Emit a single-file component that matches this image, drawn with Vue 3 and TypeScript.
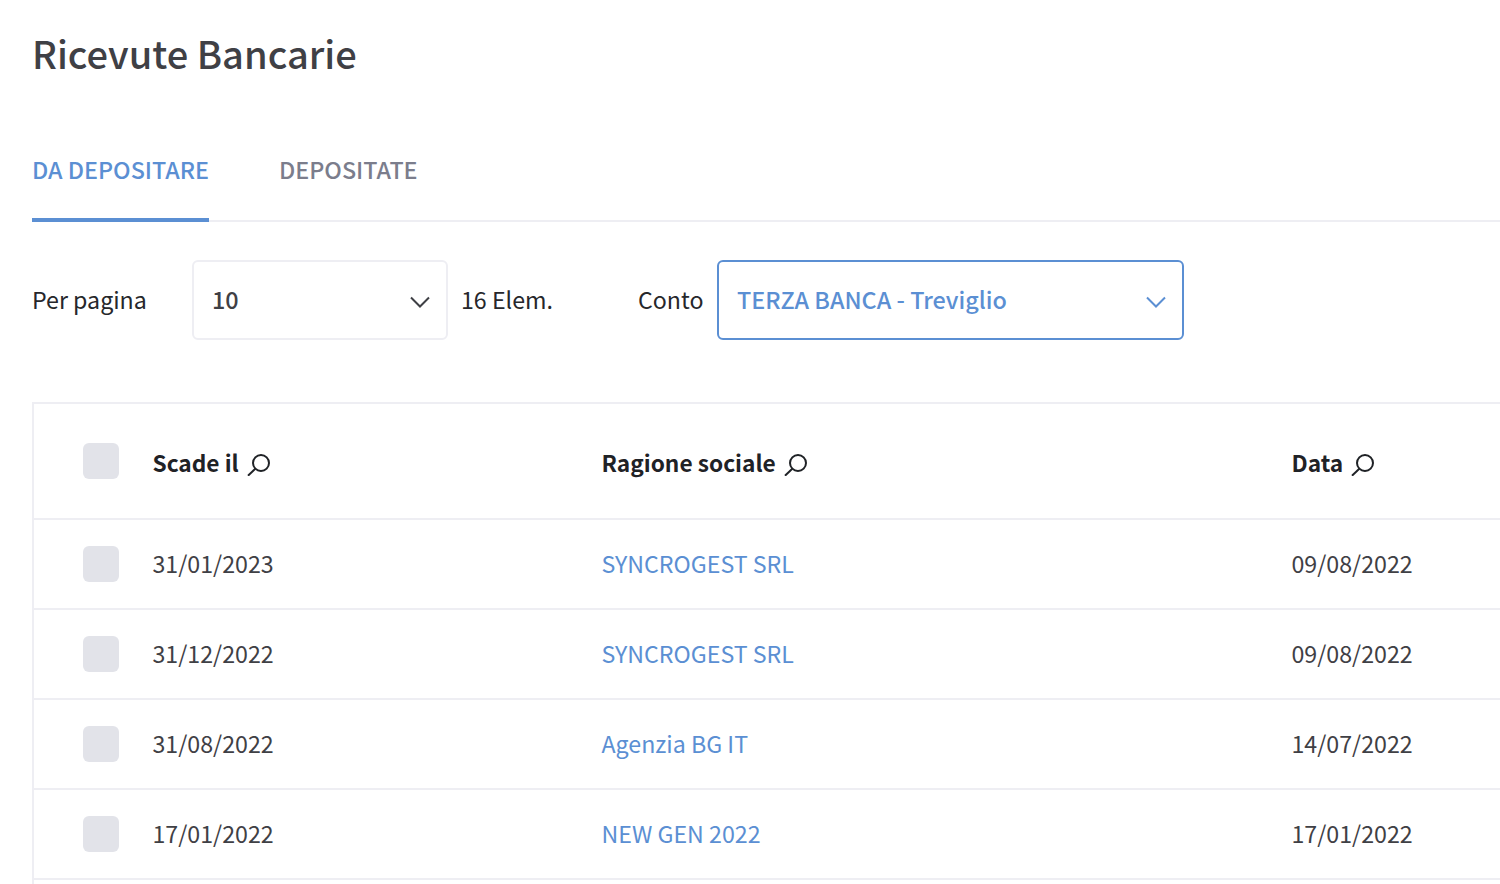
<script setup lang="ts">
interface Row {
  due: string
  name: string
  date: string
}

const rows: Row[] = [
  { due: '31/01/2023', name: 'SYNCROGEST SRL', date: '09/08/2022' },
  { due: '31/12/2022', name: 'SYNCROGEST SRL', date: '09/08/2022' },
  { due: '31/08/2022', name: 'Agenzia BG IT', date: '14/07/2022' },
  { due: '17/01/2022', name: 'NEW GEN 2022', date: '17/01/2022' }
]
</script>

<template>
  <div class="page">
    <h1 class="title">Ricevute Bancarie</h1>

    <div class="tabs">
      <div class="tab active">DA DEPOSITARE</div>
      <div class="tab">DEPOSITATE</div>
    </div>

    <div class="filters">
      <span class="label per-page">Per pagina</span>
      <div class="select small">
        <span class="value">10</span>
        <svg class="chevron" width="20" height="12" viewBox="0 0 20 12"><path d="M1 1.5l9 9 9-9" /></svg>
      </div>
      <span class="label count">16 Elem.</span>
      <span class="label conto">Conto</span>
      <div class="select wide">
        <span class="value">TERZA BANCA - Treviglio</span>
        <svg class="chevron" width="20" height="12" viewBox="0 0 20 12"><path d="M1 1.5l9 9 9-9" /></svg>
      </div>
    </div>

    <div class="table">
      <div class="row head">
        <div class="check"></div>
        <div class="cell col-due">
          Scade il
          <svg class="search" width="24" height="22" viewBox="0 0 24 22"><circle cx="14" cy="9" r="8" /><path d="M8.3 14.7L1 21.7" /></svg>
        </div>
        <div class="cell col-name">
          Ragione sociale
          <svg class="search" width="24" height="22" viewBox="0 0 24 22"><circle cx="14" cy="9" r="8" /><path d="M8.3 14.7L1 21.7" /></svg>
        </div>
        <div class="cell">
          Data
          <svg class="search" width="24" height="22" viewBox="0 0 24 22"><circle cx="14" cy="9" r="8" /><path d="M8.3 14.7L1 21.7" /></svg>
        </div>
      </div>
      <div v-for="(row, i) in rows" :key="i" class="row">
        <div class="check"></div>
        <div class="cell col-due">{{ row.due }}</div>
        <div class="cell col-name link">{{ row.name }}</div>
        <div class="cell">{{ row.date }}</div>
      </div>
    </div>
  </div>
</template>

<style>
html,
body {
  margin: 0;
  overflow: hidden;
  background: #fff;
}
</style>

<style scoped>
.page {
  box-sizing: border-box;
  height: 884px;
  overflow: hidden;
  padding: 28px 0 0 32px;
  font-family: "Noto Sans CJK SC", "Noto Sans", sans-serif;
  color: #3f4045;
}

.title {
  margin: 0;
  height: 50px;
  font-size: 38px;
  line-height: 50px;
  font-weight: 500;
  color: #3f4045;
}

/* tabs */
.tabs {
  display: flex;
  gap: 70px;
  height: 92px;
  margin-top: 50px;
  border-bottom: 2px solid #eeeef3;
}

.tab {
  height: 92px;
  padding-top: 26px;
  box-sizing: border-box;
  font-size: 23.3px;
  line-height: 30px;
  font-weight: 500;
  color: #7b7d8c;
}

.tab.active {
  color: #5b8fd3;
  height: 94px;
  border-bottom: 4px solid #5b8fd3;
}

/* filters */
.filters {
  display: flex;
  align-items: center;
  height: 80px;
  margin-top: 38px;
}

.label {
  padding-bottom: 2px;
  font-size: 23.2px;
  color: #26272b;
}

.per-page {
  width: 160px;
}

.count {
  width: 177px;
  margin-left: 13px;
}

.conto {
  width: 79px;
}

.select {
  box-sizing: border-box;
  height: 80px;
  display: flex;
  align-items: center;
  justify-content: space-between;
  padding: 0 16px 0 18px;
  border: 2px solid #eeeef3;
  border-radius: 6px;
  font-size: 23.4px;
  font-weight: 500;
}

.value {
  padding-bottom: 2px;
}

.select.small {
  width: 256px;
}

.select.wide {
  width: 467px;
  border-color: #5b8fd3;
  color: #5b8fd3;
}

.chevron {
  margin-top: 4px;
  fill: none;
  stroke: #3f4045;
  stroke-width: 2;
}

.wide .chevron {
  stroke: #5b8fd3;
}

/* table */
.table {
  margin-top: 62px;
  border-top: 2px solid #eeeef3;
  border-left: 2px solid #eeeef3;
  min-height: 500px;
}

.row {
  display: flex;
  align-items: center;
  box-sizing: border-box;
  height: 90px;
  padding-left: 49px;
  border-bottom: 2px solid #eeeef3;
  font-size: 23.2px;
}

.row .cell {
  padding-bottom: 2px;
}

.row.head {
  height: 116px;
  font-size: 22.7px;
  font-weight: 700;
  color: #1f2226;
}

.row.head .cell {
  padding-bottom: 0;
  padding-top: 2px;
}

.check {
  flex: none;
  width: 36px;
  height: 36px;
  margin-right: 33.5px;
  border-radius: 6px;
  background: #e2e3e9;
}

.cell {
  display: flex;
  align-items: center;
  gap: 8px;
  white-space: nowrap;
}

.col-due {
  flex: none;
  width: 449px;
}

.col-name {
  flex: none;
  width: 690px;
}

.link {
  color: #5b8fd3;
}

.search {
  margin-top: 6px;
  fill: none;
  stroke: #1f2226;
  stroke-width: 2;
}
</style>
